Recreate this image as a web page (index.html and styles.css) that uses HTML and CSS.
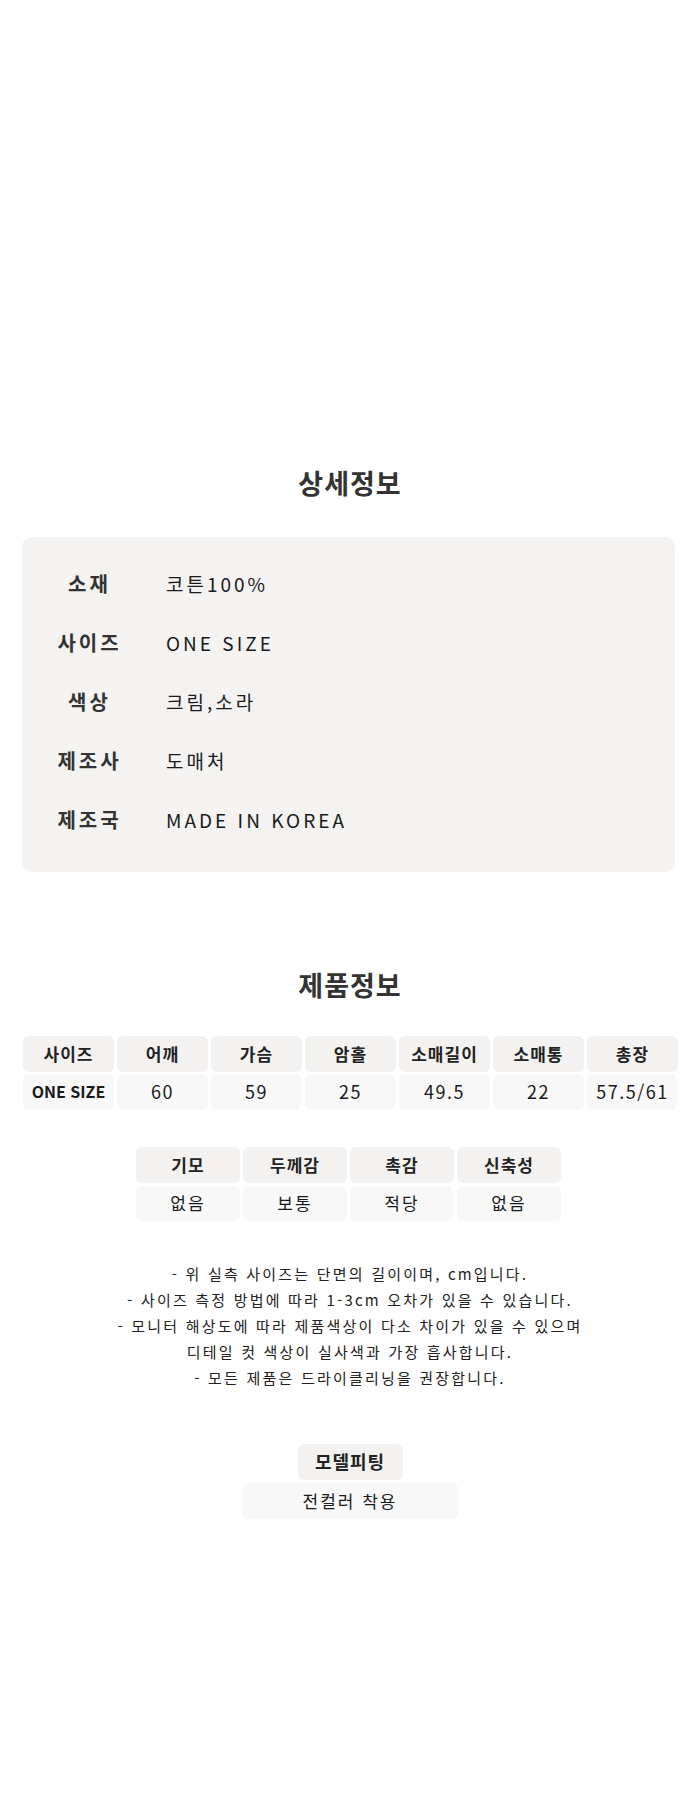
FILE: index.html
```html
<!DOCTYPE html>
<html lang="ko">
<head>
<meta charset="UTF-8" />
<meta name="viewport" content="width=device-width, initial-scale=1" />
<title>상세정보</title>
<link rel="stylesheet" href="styles.css">
</head>
<body>
<div class="page">
  <div class="top-space"></div>

  <h2 class="section-title first">상세정보</h2>
  <div class="detail-box">
    <div class="detail-row"><span class="label">소재</span><span class="value">코튼100%</span></div>
    <div class="detail-row"><span class="label">사이즈</span><span class="value">ONE SIZE</span></div>
    <div class="detail-row"><span class="label">색상</span><span class="value">크림,소라</span></div>
    <div class="detail-row"><span class="label">제조사</span><span class="value">도매처</span></div>
    <div class="detail-row"><span class="label">제조국</span><span class="value">MADE IN KOREA</span></div>
  </div>

  <h2 class="section-title second">제품정보</h2>
  <div class="size-table">
    <div class="cell head">사이즈</div>
    <div class="cell head">어깨</div>
    <div class="cell head">가슴</div>
    <div class="cell head">암홀</div>
    <div class="cell head">소매길이</div>
    <div class="cell head">소매통</div>
    <div class="cell head">총장</div>
    <div class="cell data size-name">ONE SIZE</div>
    <div class="cell data">60</div>
    <div class="cell data">59</div>
    <div class="cell data">25</div>
    <div class="cell data">49.5</div>
    <div class="cell data">22</div>
    <div class="cell data">57.5/61</div>
  </div>

  <div class="feel-table">
    <div class="cell head">기모</div>
    <div class="cell head">두께감</div>
    <div class="cell head">촉감</div>
    <div class="cell head">신축성</div>
    <div class="cell data">없음</div>
    <div class="cell data">보통</div>
    <div class="cell data">적당</div>
    <div class="cell data">없음</div>
  </div>

  <div class="notes">
    <p>- 위 실측 사이즈는 단면의 길이이며, cm입니다.</p>
    <p>- 사이즈 측정 방법에 따라 1-3cm 오차가 있을 수 있습니다.</p>
    <p>- 모니터 해상도에 따라 제품색상이 다소 차이가 있을 수 있으며</p>
    <p>디테일 컷 색상이 실사색과 가장 흡사합니다.</p>
    <p>- 모든 제품은 드라이클리닝을 권장합니다.</p>
  </div>

  <div class="fitting">
    <div class="cell head fit-head">모델피팅</div>
    <div class="cell data fit-data">전컬러 착용</div>
  </div>
</div>
</body>
</html>
```

FILE: styles.css
```css
/* Reset */
* {
  margin: 0;
  padding: 0;
  box-sizing: border-box;
}

body {
  background: #fff;
  color: #222;
  font-family: "Noto Sans CJK KR", "Noto Sans", sans-serif;
}

.page {
  width: 700px;
  min-height: 1795px;
}

.top-space {
  height: 465px;
}

/* Section titles */
.section-title {
  height: 36px;
  line-height: 36px;
  text-align: center;
  font-size: 27px;
  font-weight: 700;
  color: #333;
  letter-spacing: 1px;
}
.section-title.first {
  margin-bottom: 36px;
}
.section-title.second {
  margin-top: 95px;
  margin-bottom: 33px;
}

/* Detail box */
.detail-box {
  margin-left: 22px;
  width: 653px;
  padding: 17px 0 23px;
  background: #f4f3f2;
  border-radius: 10px;
}

.detail-row {
  display: flex;
  align-items: center;
  height: 59px;
}

.detail-row .label {
  width: 132px;
  padding-left: 3px;
  text-align: center;
  font-size: 20px;
  font-weight: 700;
  color: #333;
  letter-spacing: 3px;
}

.detail-row .value {
  padding-left: 12px;
  font-size: 19px;
  font-weight: 400;
  color: #1a1a1a;
  letter-spacing: 3px;
}

/* Cells shared */
.cell {
  display: flex;
  align-items: center;
  justify-content: center;
  border-radius: 6px;
  padding-bottom: 2px;
}
.cell.head {
  background: #f3f2f1;
  font-weight: 700;
  color: #222;
}
.cell.data {
  background: #f8f8f8;
  color: #1a1a1a;
}

/* Size table */
.size-table {
  display: grid;
  grid-template-columns: repeat(7, 91px);
  grid-auto-rows: 36px;
  column-gap: 3px;
  row-gap: 2px;
  margin-left: 23px;
}
.size-table .head {
  font-size: 17px;
  letter-spacing: 1px;
}
.size-table .data {
  font-size: 18px;
  letter-spacing: 1.5px;
}
.size-table .size-name {
  font-size: 16px;
  font-weight: 700;
  letter-spacing: 0;
}

/* Fabric feel table */
.feel-table {
  display: grid;
  grid-template-columns: repeat(4, 104px);
  grid-template-rows: 36px 35px;
  column-gap: 3px;
  row-gap: 3px;
  margin: 37px 0 0 136px;
}
.feel-table .head {
  font-size: 17px;
  letter-spacing: 1px;
}
.feel-table .data {
  font-size: 17px;
  letter-spacing: 2px;
}

/* Notes */
.notes {
  margin-top: 40px;
  text-align: center;
  font-size: 15px;
  line-height: 26px;
  color: #222;
  letter-spacing: 2.2px;
}

/* Model fitting */
.fitting {
  margin-top: 53px;
  display: flex;
  flex-direction: column;
  align-items: center;
  gap: 3px;
}
.fit-head {
  width: 105px;
  height: 36px;
  font-size: 18px;
  letter-spacing: 1px;
}
.fit-data {
  width: 216px;
  height: 36px;
  font-size: 17px;
  letter-spacing: 2px;
}
```
